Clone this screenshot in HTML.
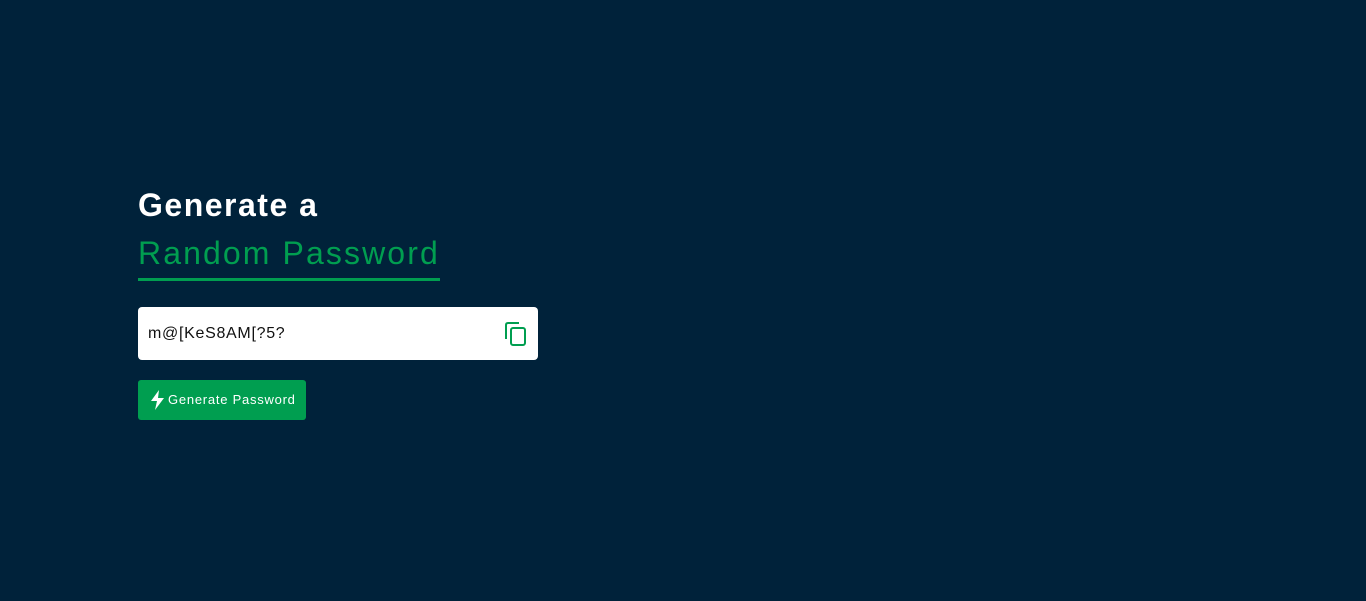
<!DOCTYPE html>
<html><head><meta charset="utf-8"><style>
html,body{margin:0;padding:0;width:1366px;height:601px;background:#00223a;overflow:hidden;font-family:"Liberation Sans",sans-serif}
.h1{position:absolute;left:138px;top:185px;font-size:32px;font-weight:bold;color:#fff;letter-spacing:1.5px;line-height:40px}
.h2{position:absolute;left:138px;top:233px;font-size:32px;color:#009e50;letter-spacing:2.1px;line-height:40px;white-space:nowrap}
.ul{position:absolute;left:138px;top:278px;width:302px;height:3px;background:#009e50}
.inp{position:absolute;left:138px;top:307px;width:400px;height:53px;background:#fff;border-radius:4px}
.pw{position:absolute;left:10px;top:17px;font-size:16px;color:#111;letter-spacing:0.7px;line-height:20px}
.cp{position:absolute;left:367px;top:15px}
.btn{position:absolute;left:138px;top:380px;width:168px;height:40px;background:#009e50;border-radius:3px;color:#fff}
.btn span{position:absolute;left:30px;top:12px;font-size:13px;letter-spacing:0.75px;line-height:16px;white-space:nowrap}
.btn svg{position:absolute;left:12px;top:10px}
</style></head><body>
<div class="h1">Generate a</div>
<div class="h2">Random Password</div>
<div class="ul"></div>
<div class="inp"><div class="pw">m@[KeS8AM[?5?</div>
<svg class="cp" width="22" height="24" viewBox="0 0 22 24"><path d="M14 1H3Q1 1 1 3V17" fill="none" stroke="#009e50" stroke-width="2"/><rect x="6" y="6" width="14" height="17" rx="2" fill="none" stroke="#009e50" stroke-width="2"/></svg>
</div>
<div class="btn"><svg width="16" height="20" viewBox="0 0 16 20"><path d="M9 0L1 11H7L5 20L14 8H8Z" fill="#fff"/></svg><span>Generate Password</span></div>
</body></html>
